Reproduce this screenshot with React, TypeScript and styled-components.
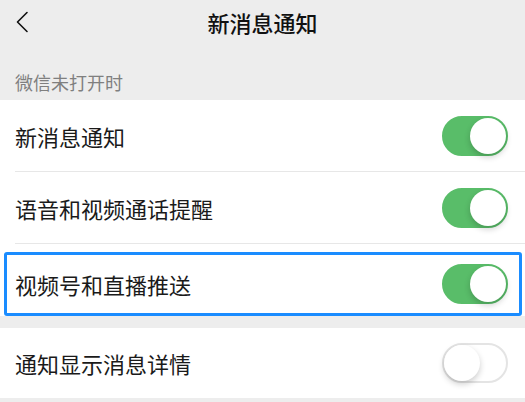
import React, { useState } from 'react';
import styled, { createGlobalStyle } from 'styled-components';

const GlobalStyle = createGlobalStyle`
  html, body {
    margin: 0;
    padding: 0;
    background-color: #ededed;
    font-family: "Noto Sans CJK SC", "Noto Sans", sans-serif;
    color: #191919;
  }
`;

const Page = styled.div`
  width: 525px;
  min-height: 402px;
  background-color: #ededed;
`;

const Header = styled.div`
  height: 44px;
  display: grid;
  grid-template-columns: 60px 1fr 60px;
  align-items: center;
`;

const BackButton = styled.div`
  display: flex;
  align-items: center;
  padding-left: 15px;
  height: 100%;
  cursor: pointer;
`;

const Title = styled.span`
  text-align: center;
  font-size: 22px;
  font-weight: 500;
  color: #111;
`;

const SectionLabel = styled.div`
  height: 56px;
  display: flex;
  align-items: flex-end;
  padding: 0 15px 6px;
  box-sizing: border-box;
  font-size: 18px;
  line-height: 24px;
  color: #7f7f7f;
`;

const Group = styled.div`
  background-color: #ffffff;
`;

const Gap = styled.div`
  height: 12px;
`;

const Row = styled.div<{ focused?: boolean }>`
  padding: ${(p) => (p.focused ? '8px 3px 0 4px' : '0 0 0 15px')};
`;

const RowInner = styled.div<{ focused?: boolean; divider?: boolean; tall?: number }>`
  height: ${(p) => p.tall}px;
  box-sizing: border-box;
  display: flex;
  align-items: center;
  justify-content: space-between;
  padding: ${(p) => (p.focused ? '0 11px 0 8px' : '0 17px 0 0')};
  border: ${(p) => (p.focused ? '3px solid #1a8cff' : 'none')};
  border-radius: ${(p) => (p.focused ? '3px' : '0')};
  border-bottom: ${(p) =>
    p.focused ? '3px solid #1a8cff' : p.divider ? '1px solid #e7e7e7' : 'none'};
`;

const Label = styled.span`
  font-size: 22px;
  color: #1a1a1a;
`;

const Track = styled.button<{ on: boolean }>`
  position: relative;
  width: 66px;
  height: 40px;
  padding: 0;
  border-radius: 20px;
  border: 2px solid ${(p) => (p.on ? '#59bd69' : '#e4e4e4')};
  background-color: ${(p) => (p.on ? '#59bd69' : '#ffffff')};
  box-sizing: border-box;
  outline: none;
  cursor: pointer;
  transition: all 0.2s;
`;

const Knob = styled.span<{ on: boolean }>`
  position: absolute;
  top: 0;
  left: ${(p) => (p.on ? '26px' : '0')};
  width: 36px;
  height: 36px;
  border-radius: 50%;
  background-color: #ffffff;
  box-shadow: 0 3px 6px rgba(0, 0, 0, 0.2);
  transition: left 0.2s;
`;

function Switch({ on, onToggle }: { on: boolean; onToggle: () => void }): JSX.Element {
  return (
    <Track type="button" on={on} onClick={onToggle}>
      <Knob on={on} />
    </Track>
  );
}

function BackIcon(): JSX.Element {
  return (
    <svg width="14" height="22" viewBox="0 0 14 22" fill="none">
      <path d="M12 1.5 L2.5 11 L12 20.5" stroke="#111" strokeWidth="1.6" strokeLinecap="round" strokeLinejoin="round" />
    </svg>
  );
}

function App(): JSX.Element {
  const [settings, setSettings] = useState({
    message: true,
    call: true,
    channels: true,
    detail: false,
  });

  const toggle = (key: keyof typeof settings) =>
    setSettings((prev) => ({ ...prev, [key]: !prev[key] }));

  return (
    <Page>
      <GlobalStyle />
      <Header>
        <BackButton>
          <BackIcon />
        </BackButton>
        <Title>新消息通知</Title>
        <div />
      </Header>
      <SectionLabel>微信未打开时</SectionLabel>
      <Group>
        <Row>
          <RowInner divider tall={72}>
            <Label>新消息通知</Label>
            <Switch on={settings.message} onToggle={() => toggle('message')} />
          </RowInner>
        </Row>
        <Row>
          <RowInner divider tall={72}>
            <Label>语音和视频通话提醒</Label>
            <Switch on={settings.call} onToggle={() => toggle('call')} />
          </RowInner>
        </Row>
        <Row focused>
          <RowInner focused tall={64}>
            <Label>视频号和直播推送</Label>
            <Switch on={settings.channels} onToggle={() => toggle('channels')} />
          </RowInner>
        </Row>
      </Group>
      <Gap />
      <Group>
        <Row>
          <RowInner tall={70}>
            <Label>通知显示消息详情</Label>
            <Switch on={settings.detail} onToggle={() => toggle('detail')} />
          </RowInner>
        </Row>
      </Group>
    </Page>
  );
}

export default App;
